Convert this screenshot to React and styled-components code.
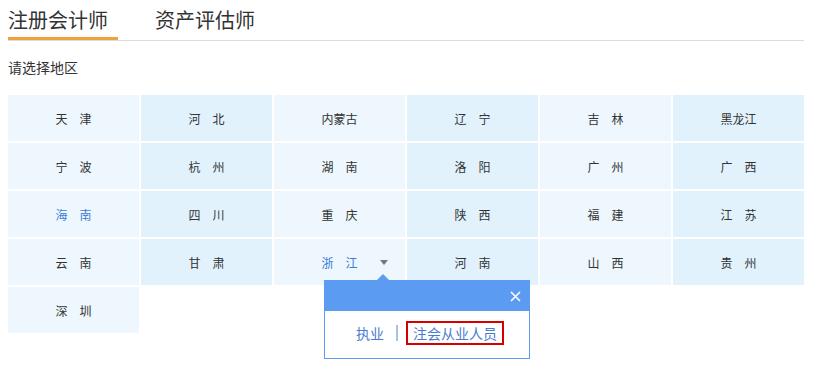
import React, { useState } from "react";
import styled, { createGlobalStyle } from "styled-components";

const GlobalStyle = createGlobalStyle`
  body {
    margin: 0;
    background: #fff;
    font-family: "Noto Sans CJK SC", "Noto Sans", sans-serif;
  }
`;

const Page = styled.div`
  width: 796px;
  min-height: 372px;
  padding: 0 8px;
`;

const Tabs = styled.div`
  display: flex;
  gap: 37px;
  border-bottom: 1px solid #dcdcdc;
  height: 40px;
`;

const Tab = styled.div`
  font-size: 20px;
  line-height: 20px;
  padding-top: 10px;
  color: #333;
  width: ${(p) => (p.$active ? "110px" : "auto")};
  height: 27px;
  border-bottom: 3px solid ${(p) => (p.$active ? "#f0a13c" : "transparent")};
  box-sizing: content-box;
`;

const Label = styled.div`
  font-size: 14px;
  color: #333;
  line-height: 16px;
  margin-top: 18px;
`;

const Grid = styled.div`
  display: grid;
  grid-template-columns: repeat(6, 131px);
  grid-auto-rows: 46px;
  gap: 2px;
  margin-top: 20px;
`;

const Cell = styled.div`
  position: relative;
  display: flex;
  align-items: center;
  justify-content: center;
  font-size: 12px;
  color: ${(p) => (p.$blue ? "#3b7dd8" : "#333")};
  background: ${(p) => (p.$alt ? "#e1f2fd" : "#edf7fd")};
  white-space: pre;
`;

const Caret = styled.span`
  position: absolute;
  left: 106px;
  top: 21px;
  width: 0;
  height: 0;
  border-left: 4px solid transparent;
  border-right: 4px solid transparent;
  border-top: 5px solid #777;
`;

const Popup = styled.div`
  position: absolute;
  left: 50px;
  top: 41px;
  width: 204px;
  border: 1px solid #5b9cf2;
  background: #fff;
  z-index: 5;
  &::before {
    content: "";
    position: absolute;
    left: 51px;
    top: -7px;
    border-left: 7px solid transparent;
    border-right: 7px solid transparent;
    border-bottom: 7px solid #5b9cf2;
  }
`;

const PopupHead = styled.div`
  height: 30px;
  background: #5b9cf2;
  display: flex;
  justify-content: flex-end;
  align-items: center;
  padding-right: 8px;
`;

const PopupBody = styled.div`
  height: 43px;
  display: flex;
  align-items: center;
  justify-content: center;
  gap: 8px;
  font-size: 14px;
  color: #4a7bd0;
  padding-left: 6px;
  padding-bottom: 4px;
`;

const Sep = styled.span`
  width: 2px;
  height: 16px;
  background: #a9c0e8;
  margin-left: 4px;
`;

const Boxed = styled.span`
  border: 2px solid #d60000;
  padding: 2px 5px;
  line-height: 16px;
`;

const rows = [
  ["天　津", "河　北", "内蒙古", "辽　宁", "吉　林", "黑龙江"],
  ["宁　波", "杭　州", "湖　南", "洛　阳", "广　州", "广　西"],
  ["海　南", "四　川", "重　庆", "陕　西", "福　建", "江　苏"],
  ["云　南", "甘　肃", "浙　江", "河　南", "山　西", "贵　州"],
  ["深　圳"],
];

export default function App() {
  const [active] = useState("浙　江");
  const cells = rows.flat();
  return (
    <Page>
      <GlobalStyle />
      <Tabs>
        <Tab $active>注册会计师</Tab>
        <Tab>资产评估师</Tab>
      </Tabs>
      <Label>请选择地区</Label>
      <Grid>
        {cells.map((name, i) => (
          <Cell key={i} $alt={i % 2 === 1} $blue={name === "海　南" || name === active}>
            {name}
            {name === active && (
              <>
                <Caret />
                <Popup>
                  <PopupHead>
                    <svg width="11" height="11" viewBox="0 0 11 11">
                      <path d="M1 1L10 10M10 1L1 10" stroke="#fff" strokeWidth="1.5" />
                    </svg>
                  </PopupHead>
                  <PopupBody>
                    <span>执业</span>
                    <Sep />
                    <Boxed>注会从业人员</Boxed>
                  </PopupBody>
                </Popup>
              </>
            )}
          </Cell>
        ))}
      </Grid>
    </Page>
  );
}
